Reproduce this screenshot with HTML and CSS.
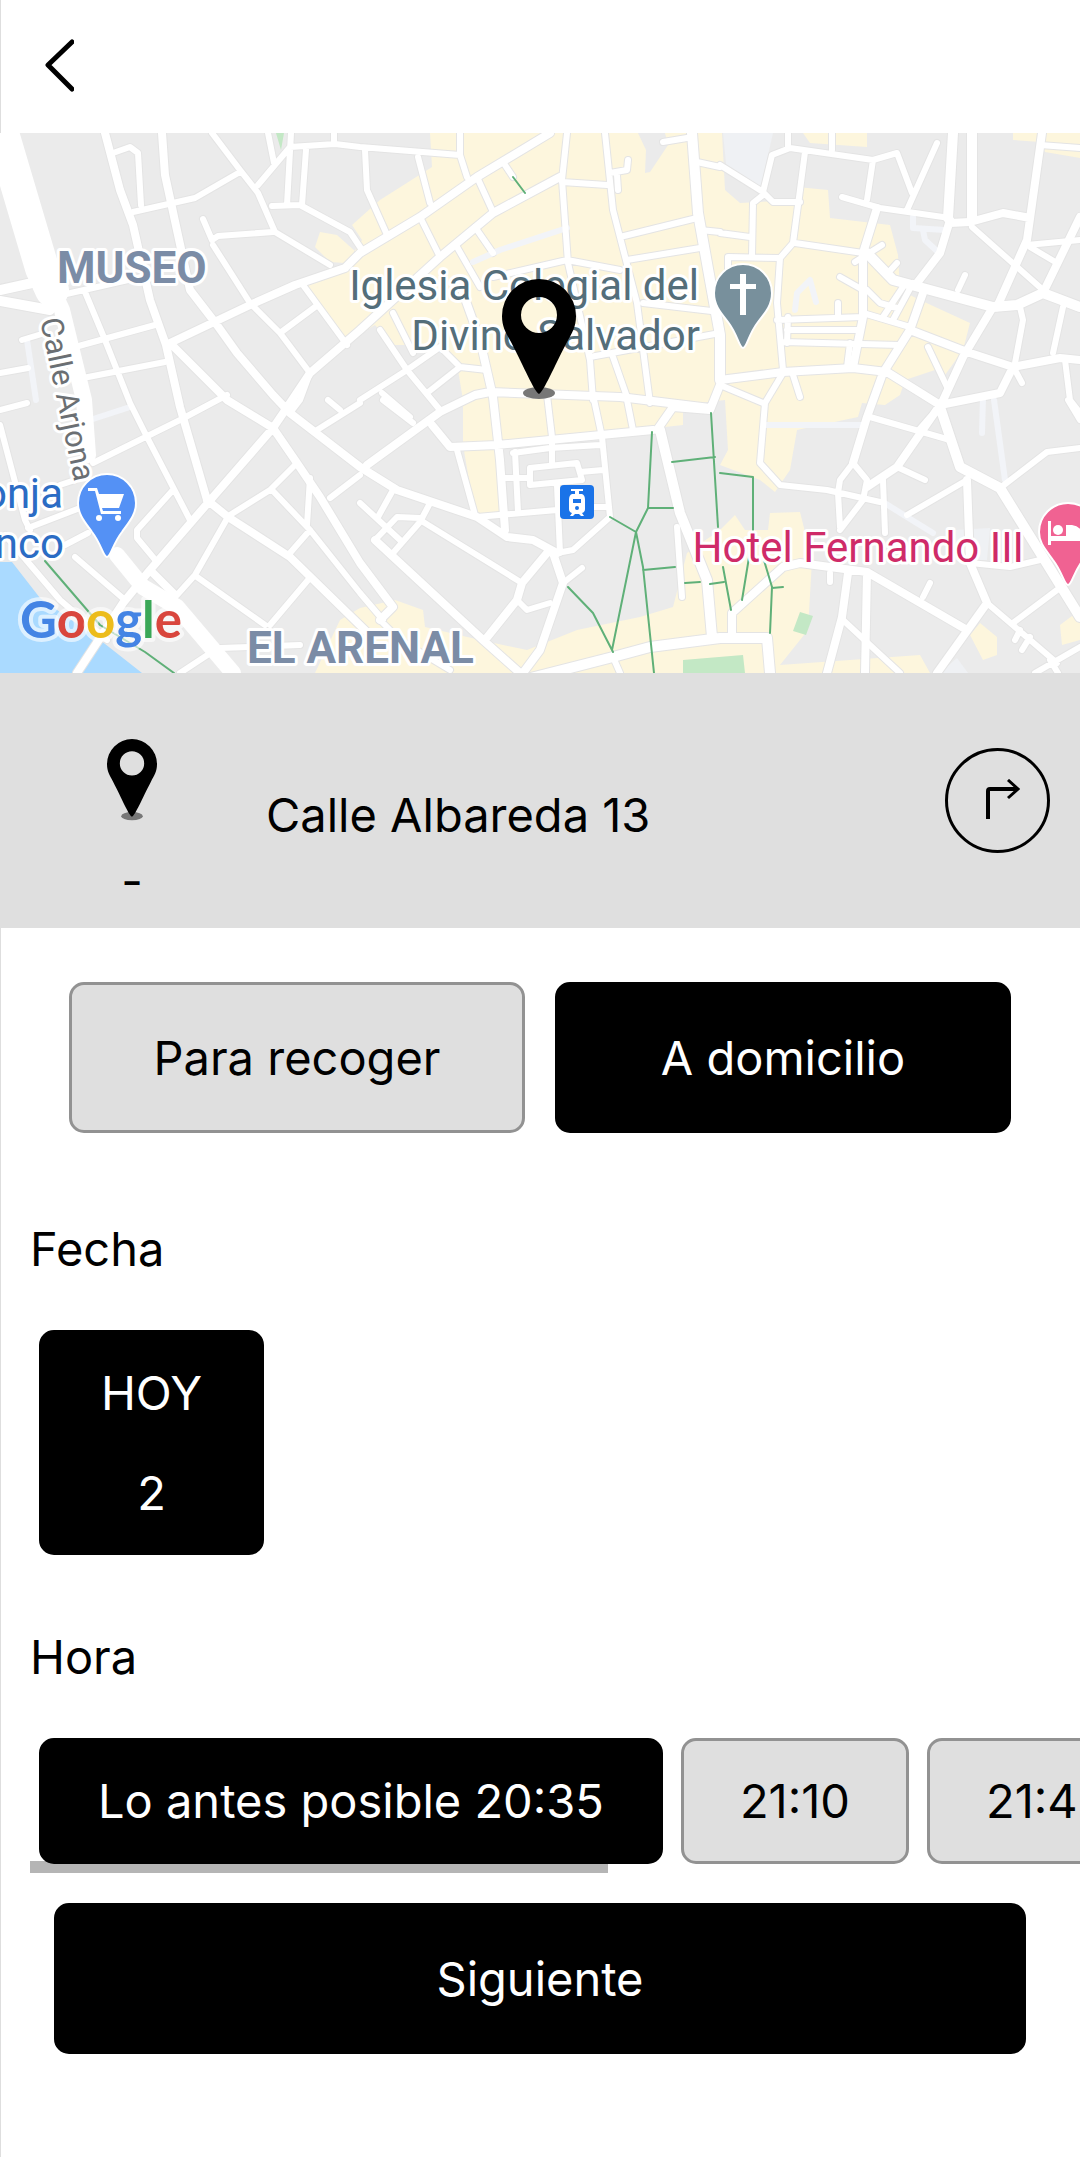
FILE: index.html
```
<!DOCTYPE html>
<html lang="es">

<head>
    <meta charset="UTF-8">
    <meta name="viewport" content="width=device-width, initial-scale=1.0">
    <title>Entrega</title>
    <link rel="stylesheet" href="styles.css">
</head>

<body>
    <header class="topbar">
        <button class="back-button" type="button" aria-label="Volver">
            <svg width="30" height="54" viewBox="0 0 30 54">
                <path d="M28 3 L4 26 L28 50" />
            </svg>
        </button>
    </header>

    <main>
        <svg class="map" viewBox="0 133 1080 540" role="img" aria-label="Mapa">
            <defs>
                <path id="roads-small" d="M212 133L240 170L258 193L275 232L330 265M113 153L130 147L138 153L141 205M133 212L195 198L240 172M258 185L290 147L335 144L360 147L460 155M268 133L274 163M291 133L287 205M306 150L302 205M334 133V144M272 206L300 205L350 232L362 250M203 219L212 240L218 236L273 232M213 245L250 303L280 333L310 373M303 285L347 345M280 333L315 307M62 295L150 275M85 292L105 340L130 403L147 437L190 520M75 347L155 325M83 378L165 362M22 340L45 333M0 373L28 368M0 410L27 403M0 425L25 520L30 530M93 463L180 420L227 395M60 485L75 480M28 528L80 508M65 545L88 533M173 490L137 530V538L157 562M75 557L125 600M5 535L60 600L107 640M228 517L195 575L177 595M297 463L270 490L230 515M272 490L310 530L360 593L383 620M310 530L290 553M310 478L307 525M197 577L265 625M308 580L270 625M220 648L300 645M180 673L215 650M290 413L300 400L310 373M317 430L360 403M328 400L340 410M330 498L360 475M383 400L413 423M457 450L475 515M547 395L552 437M593 395L602 437L610 517M627 400L633 430M513 453L550 448L600 445M515 452L518 512M552 437V463M530 468L577 463L582 480L530 485ZM505 478H530M580 472L603 470M557 485L560 553M477 517L557 510M593 507H607M610 517L573 550L557 553M563 583L582 568M517 600L527 610L550 603M420 520L522 583M430 503L420 522L393 553M375 540L397 517L420 518M393 490L378 517M360 503L400 540M613 657L620 673M677 527L682 597M380 620L400 640L450 670M460 133V155L467 177M365 150L367 190L388 237M418 157L430 203M477 177L493 212M503 162L513 177M420 217L440 257M457 247L480 287M475 227L493 253M567 133L562 180L568 263L590 360L593 400M562 182L607 185M605 133L613 210L637 303L650 403M493 277L567 260L620 270M610 173L627 170L628 160M617 175L618 190M620 237L697 218M627 260L700 248M663 142L693 137M697 162L720 167M700 230L720 232M590 357L720 333M643 303L720 312M613 357L627 397M360 400L407 370L440 347M380 330L407 370L440 410M393 313L413 353M427 393L460 367L487 370M440 347L460 367M382 393L410 417M720 165L763 192L773 202L800 202M763 192L772 155L790 148L873 160L897 153L912 193M788 133V148M832 133V150M805 152L793 243L780 258L728 257V275M763 195L753 203L752 257M720 233L750 237M780 258L777 303L783 370M873 160L867 200M937 143L907 210M842 197L880 208L950 218M795 243L863 253M972 227L1043 290M1027 245L1080 240M1030 247L1057 263M1040 145L1080 148M913 283L893 320M863 313L910 327M903 287L883 317M840 277L863 290M867 290L880 303L897 308M777 320L863 317M787 330H860M783 342L900 345M788 317L787 343M850 343L847 367M928 347L947 387M1020 307L1023 320L1015 363M1063 307L1053 353M1065 360L1070 400L1080 413M1015 370L1022 383M783 373L765 403L760 463L780 485L827 490L880 502M720 385L763 403M793 375L800 397M853 463L840 480L838 493L840 527M853 463L867 480L863 500L840 530M870 417L950 440M897 467L925 480M883 480L885 533M907 515L967 480M1000 488L1047 452L1080 448M970 563L1010 567L1040 560M843 620L900 673M987 603L1057 663M1057 590L1013 623M1080 647L1035 673M1050 660L1058 673M830 573V582M930 583L923 597M1020 630L1015 640M1030 637L1022 650M1068 400L1080 420M958 290L965 275M855 262L882 245M888 273L897 263M838 303V317" />
                <path id="roads-medium" d="M105 133L120 190L133 225L150 300L166 345L180 407L207 500M162 133L165 175L178 235L190 290L217 325L237 353L273 395L290 413L360 467L397 490L477 517L507 537L533 540L557 553M345 268L295 285L250 305L170 343L227 400L273 428M360 253L345 268M310 373L290 403L273 428L213 497L150 570L123 603L77 673M360 330L310 373M207 500L228 517L290 557L370 635M273 428L297 463L320 497L360 563L393 607L380 620M367 465L440 412L475 395L490 392L620 397L710 408M432 425L450 447L497 445L653 430M463 293L480 340L493 397L500 460L505 530M553 553L563 583L540 650L523 673M547 553L522 583L517 600L485 640M375 540L483 640L520 673M657 430L673 407L710 410L722 380M360 253L420 217L477 177L550 133M360 330L440 257L493 213L560 177M877 208L863 253V317L853 367M950 223L970 222L1003 213L1030 218M950 220L940 253L917 283M1042 133L1027 240L997 307M1080 217L1043 293M993 307L963 357L940 407L920 430M923 293L910 330L883 373L867 417L853 463M910 330L967 352L1013 367L1060 358L1080 360M720 380L783 372L853 368L887 372L940 405L1000 393L1013 367M867 487L897 467L940 405M967 480L970 563L987 603L937 673M732 637V613L783 567L800 563L867 572L967 630M848 573L842 617L827 673M867 572L865 673M150 570L175 595" />
                <path id="roads-large" d="M660 430L680 513L707 580L712 637M523 680L613 657L650 647L720 638H767L770 673M692 133L698 213L710 280L720 335V380M867 253L893 280L993 307L1017 305L1043 293L1080 307M953 133L948 218M972 133V220M940 407L960 467L1000 488L1080 617M0 290L55 278M0 301L50 310" />
            </defs>

            <rect class="land" y="133" width="1080" height="540" />
            <path class="busy" d="M430 133L432 167L380 200L352 225L362 240L352 255L345 268L305 285L347 342L375 325L392 345L440 345L458 370L463 400V445L475 515H500V445L683 425V405L725 400L728 450L720 465L760 480L775 492L790 470L797 430L858 417L862 403L885 405L900 395L905 380L935 370L945 375L963 350L970 323L920 300L900 290L898 255L890 225L830 218L828 190L797 187V200L740 203L725 190L722 133ZM320 232L337 235L356 252L345 263L330 262L315 247ZM315 673L340 620L360 608L395 600L423 610L425 627L480 640L527 650L577 630L640 617L673 607L687 553L720 530L735 515L745 530H768L770 513L800 512L812 560L808 630L780 665L920 655L930 673ZM980 623L997 637V655L983 660L970 635ZM1060 625L1080 610V640L1062 645ZM803 133H867V147L810 143ZM1013 133H1080V158L1045 152L1040 142L1013 140Z" />
            <path class="land" d="M638 133H665L668 145L650 172L645 173L646 150ZM515 453L595 448V500H515Z" />
            <path class="plaza" d="M723 133H773L760 190L727 173ZM955 530L990 528L987 560H950ZM940 673L957 658L968 673Z" />
            <path class="water" d="M0 562H12L40 598L100 640L142 673H0Z" />
            <path class="park" d="M683 660L743 655L745 673H683ZM800 612L813 616L806 635L793 631ZM276 133H284L281 150Z" />

            <g class="casing">
                <use class="small" href="#roads-small" />
                <use class="medium" href="#roads-medium" />
                <use class="large" href="#roads-large" />
            </g>
            <path class="lane" d="M473 262L500 250L567 228M767 425H863M983 397L982 433M994 400L1005 480M883 502L907 517L933 533M27 340L36 400M795 310L797 293L810 280L816 302M913 217V228L945 230M923 230L925 240L938 252M90 420L130 407" />
            <g class="road">
                <path class="avenue" d="M2 133L42 268L52 290" />
                <path class="boulevard" d="M48 280L62 310L84 400L88 455M117 555L143 587L177 607L233 673" />
                <use class="small" href="#roads-small" />
                <use class="medium" href="#roads-medium" />
                <use class="large" href="#roads-large" />
            </g>
            <path class="trail" d="M45 561L100 625L145 652L174 673M513 177L525 193M652 432L648 508L636 532L612 650M610 517L636 532L643 567L654 673M648 508H673M643 570L675 567M568 587L593 613L613 652M711 413L718 527M672 462L715 457M685 583L700 582M720 473L753 477V533L742 600M723 567L731 610M763 557L772 587L770 633M772 588L783 587M710 584L724 582" />

            <g class="label">
                <text class="district" x="57" y="283">MUSEO</text>
                <text class="district" x="247" y="663">EL ARENAL</text>
                <text class="street" transform="translate(40 320) rotate(78)">Calle Arjona</text>
                <text class="church end" x="699" y="300">Iglesia Colegial del</text>
                <text class="church end" x="700" y="350">Divino Salvador</text>
                <text class="shop end" x="63" y="508">Lonja</text>
                <text class="shop end" x="64" y="558">Barranco</text>
                <text class="hotel end" x="1024" y="562">Hotel Fernando III</text>
            </g>

            <g class="poi">
                <path class="church" d="M743 348C739 348 738 335 728 322C720 312 714 305 714 293A29 29 0 0 1 772 293C772 305 766 312 758 322C748 335 747 348 743 348Z" />
                <path class="shop" d="M107 557C103 557 102 545 92 532C84 521 78 514 78 503A29 29 0 0 1 136 503C136 514 130 521 122 532C112 545 111 557 107 557Z" />
                <path class="hotel" d="M1068 585C1064 585 1063 573 1053 560C1045 549 1039 543 1039 532A29 29 0 0 1 1097 532C1097 543 1091 549 1083 560C1073 573 1072 585 1068 585Z" />
            </g>
            <g class="glyph">
                <path d="M740 274H746V284H756V289H746V315H740V289H730V284H740Z" />
                <path d="M88 488H97L99 494H124L119 508H102L103 511H121V514H101L95 491H88Z" />
                <circle cx="99" cy="518" r="3" />
                <circle cx="118" cy="518" r="3" />
                <path d="M1048 521H1051V536H1066V525H1072Q1083 526 1085 541H1051V545H1048Z" />
                <circle cx="1058" cy="530" r="5" />
            </g>

            <rect class="tram" x="560" y="485" width="34" height="34" rx="4" />
            <path class="glyph" d="M571 489H583V491H579V494H582Q585 495 585 500V509Q585 512 582 513L584 516H581L579 514H575L573 516H570L572 513Q569 512 569 509V500Q569 495 572 494H575V491H571Z" />
            <path class="tram" d="M573 499H581V503H573ZM575 508A2 2 0 0 0 579 508A2 2 0 0 0 575 508Z" />

            <text class="brand" x="20" y="638"><tspan class="g-blue">G</tspan><tspan class="g-red">o</tspan><tspan class="g-yellow">o</tspan><tspan class="g-blue">g</tspan><tspan class="g-green">l</tspan><tspan class="g-red">e</tspan></text>

            <svg x="502" y="279" width="74" height="121" viewBox="0 0 74 121">
                <ellipse class="pin-shadow" cx="37" cy="114" rx="16" ry="6" />
                <path class="pin" fill-rule="evenodd" d="M37 115C32 112 22 88 9 63C4 54 0 48 0 37A37 37 0 0 1 74 37C74 48 70 54 65 63C52 88 42 112 37 115ZM37 18A18 18 0 0 0 37 54A18 18 0 0 0 37 18Z" />
            </svg>
        </svg>

        <section class="address">
            <div class="address-marker">
                <svg width="50" height="82" viewBox="0 0 74 121">
                    <ellipse class="pin-shadow" cx="37" cy="114" rx="16" ry="6" />
                    <path class="pin" fill-rule="evenodd" d="M37 115C32 112 22 88 9 63C4 54 0 48 0 37A37 37 0 0 1 74 37C74 48 70 54 65 63C52 88 42 112 37 115ZM37 18A18 18 0 0 0 37 54A18 18 0 0 0 37 18Z" />
                </svg>
                <span>-</span>
            </div>
            <p class="address-text">Calle Albareda 13</p>
            <button class="route-button" type="button" aria-label="Cómo llegar">
                <svg width="44" height="42" viewBox="0 0 44 42">
                    <path d="M12 40V12Q12 10 14 10H42" stroke-width="4" />
                    <path d="M32 1L42 10L32 19" stroke-width="3" />
                </svg>
            </button>
        </section>

        <section class="delivery">
            <button class="option" type="button">Para recoger</button>
            <button class="option selected" type="button">A domicilio</button>
        </section>

        <section class="schedule">
            <h2>Fecha</h2>
            <div class="slots">
                <button class="option date selected" type="button">
                    <span>HOY</span>
                    <span>2</span>
                </button>
            </div>
        </section>

        <section class="schedule">
            <h2>Hora</h2>
            <div class="slots">
                <button class="option time selected" type="button">Lo antes posible 20:35</button>
                <button class="option time" type="button">21:10</button>
                <button class="option time" type="button">21:45</button>
            </div>
            <div class="scroll-thumb"></div>
        </section>
    </main>

    <footer class="actions">
        <button class="option selected next-button" type="button">Siguiente</button>
    </footer>
</body>

</html>
```

FILE: styles.css
```
* {
    box-sizing: border-box;
}

body {
    margin: 0;
    background-color: #fff;
    box-shadow: inset 1px 0 #dedede;
    color: #000;
    font-family: Inter, "Liberation Sans", sans-serif;
    font-size: 47px;
    line-height: 60px;
    overflow-x: hidden;
}

button {
    padding: 0;
    border: none;
    background: none;
    color: inherit;
    font: inherit;
    cursor: pointer;
}

svg {
    display: block;
}

/* Top bar */
.topbar {
    padding: 39px 44px 40px;
}

.back-button {
    display: block;
}

.back-button path {
    fill: none;
    stroke: #000;
    stroke-width: 5;
    stroke-linecap: round;
    stroke-linejoin: round;
}

/* Map */
.map {
    width: 100%;
    font-family: Roboto, sans-serif;
}

.land {
    fill: #ebebeb;
}

.busy {
    fill: #fdf6dd;
}

.plaza {
    fill: #eff1f4;
}

.water {
    fill: #aadaff;
}

.park {
    fill: #c3e8c5;
}

.casing,
.road,
.lane,
.trail {
    fill: none;
    stroke-linecap: round;
    stroke-linejoin: round;
}

.casing {
    stroke: #e4e4e4;
}

.casing .small {
    stroke-width: 8;
}

.casing .medium {
    stroke-width: 10;
}

.casing .large {
    stroke-width: 12;
}

.road {
    stroke: #fff;
}

.road .small {
    stroke-width: 6;
}

.road .medium {
    stroke-width: 8;
}

.road .large {
    stroke-width: 10;
}

.road .boulevard {
    stroke-width: 16;
}

.road .avenue {
    stroke-width: 34;
}

.lane {
    stroke: #f2f4f8;
    stroke-width: 6;
}

.trail {
    stroke: #5fb078;
    stroke-width: 2;
}

.label text {
    font-size: 42px;
    stroke: #fff;
    stroke-width: 6;
    stroke-linejoin: round;
    paint-order: stroke;
}

.label .end {
    text-anchor: end;
}

.label .district {
    font-size: 44px;
    font-weight: 700;
    fill: #7b8ca6;
}

.label .street {
    font-size: 31px;
    fill: #6b6f73;
}

.label .church {
    fill: #546e7a;
}

.label .shop {
    fill: #2b6cc4;
}

.label .hotel {
    fill: #cf2b68;
}

.poi {
    stroke: #fff;
    stroke-width: 2;
}

.poi .church {
    fill: #78909c;
}

.poi .shop {
    fill: #5491f5;
}

.poi .hotel {
    fill: #f06292;
}

.glyph {
    fill: #fff;
}

.tram {
    fill: #1a73e8;
}

.brand {
    font-family: Lato, sans-serif;
    font-size: 51px;
    font-weight: 700;
    stroke: rgba(255, 255, 255, 0.6);
    stroke-width: 8;
    stroke-linejoin: round;
    paint-order: stroke;
}

.g-blue {
    fill: #4484e4;
}

.g-red {
    fill: #d9463d;
}

.g-yellow {
    fill: #ecbc1c;
}

.g-green {
    fill: #3aa757;
}

.pin {
    fill: #000;
}

.pin-shadow {
    fill: #777;
}

/* Address */
.address {
    display: flex;
    align-items: center;
    padding: 66px 30px 17px 107px;
    background-color: #dfdfdf;
}

.address-marker {
    display: flex;
    flex-direction: column;
    align-items: center;
    gap: 30px;
    width: 50px;
}

.address-text {
    flex: 1;
    margin: 0 0 20px 109px;
}

.route-button {
    display: flex;
    align-items: center;
    justify-content: center;
    width: 105px;
    height: 105px;
    margin-bottom: 50px;
    border: 3px solid #000;
    border-radius: 50%;
}

.route-button path {
    fill: none;
    stroke: #000;
}

/* Options */
.option {
    height: 151px;
    border: 3px solid #929292;
    border-radius: 15px;
    background-color: #dfdfdf;
    white-space: nowrap;
}

.selected {
    border-color: #000;
    background-color: #000;
    color: #fff;
}

.delivery {
    display: grid;
    grid-template-columns: 1fr 1fr;
    gap: 30px;
    padding: 54px 69px 0;
}

.schedule {
    padding: 86px 0 0 30px;
}

.schedule + .schedule {
    padding-top: 72px;
}

h2 {
    margin: 0;
    font-size: 47px;
    font-weight: 400;
}

/* Sits above the scroll thumb */
.slots {
    position: relative;
    z-index: 1;
    display: flex;
    gap: 18px;
    margin-top: 51px;
    padding-left: 9px;
    overflow: hidden;
}

.date {
    display: flex;
    flex-direction: column;
    align-items: center;
    justify-content: center;
    gap: 40px;
    width: 225px;
    height: 225px;
}

.time {
    flex: none;
    min-width: 225px;
    height: 126px;
    padding: 0 56px;
}

.scroll-thumb {
    width: 55%;
    height: 12px;
    margin-top: -3px;
    background-color: #b5b5b5;
}

/* Footer */
.actions {
    padding: 30px 54px 104px;
}

.next-button {
    width: 100%;
}
```
